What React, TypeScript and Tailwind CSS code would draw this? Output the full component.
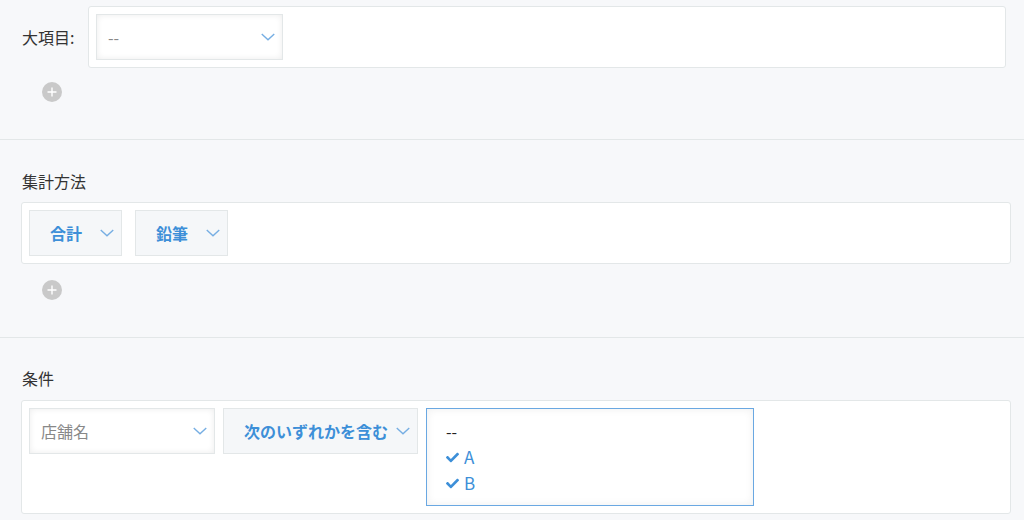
import { FaCheck } from "react-icons/fa";

const font = { fontFamily: '"Noto Sans CJK JP", "Noto Sans", sans-serif' };

function Chevron({ className = "" }: { className?: string }) {
  return (
    <svg viewBox="0 0 15 8" className={`w-[14px] h-[8px] shrink-0 ${className}`} fill="none">
      <path d="M0.8 0.8 L7.5 7 L14.2 0.8" stroke="#76aee3" strokeWidth="1.5" />
    </svg>
  );
}

function PlainSelect({ value, width }: { value: string; width: string }) {
  return (
    <div
      className={`${width} h-[46px] flex items-center justify-between pl-[11px] pr-[7px] bg-white border border-[#e3e7e8] shadow-[inset_0_0_6px_rgba(0,0,0,0.08)]`}
    >
      <span className="text-[16px] text-[#888]">{value}</span>
      <Chevron />
    </div>
  );
}

function BlueSelect({ value, width }: { value: string; width: string }) {
  return (
    <div
      className={`${width} h-[46px] flex items-center justify-between pl-[20px] pr-[7px] bg-[#f5f7f9] border border-[#e3e7e8]`}
    >
      <span className="text-[16px] font-bold text-[#3d8fd8]">{value}</span>
      <Chevron />
    </div>
  );
}

function AddButton() {
  return (
    <div className="ml-[21px] w-[20px] h-[20px] rounded-full bg-[#c9c9c9] flex items-center justify-center">
      <svg viewBox="0 0 10 10" className="w-[10px] h-[10px]">
        <path d="M5 0.5 V9.5 M0.5 5 H9.5" stroke="#fff" strokeWidth="1.4" />
      </svg>
    </div>
  );
}

export default function App() {
  return (
    <div className="w-[1024px] h-[520px] overflow-hidden bg-[#f7f8fa] text-[#333]" style={font}>
      {/* 大項目 */}
      <section className="pt-[6px] pl-[21px] pr-[18px] pb-[37px] border-b border-[#e3e7e8]">
        <div className="flex items-center">
          <div className="w-[67px] text-[16px] leading-[24px] pl-[1px]">大項目:</div>
          <div className="flex-1 bg-white border border-[#e3e7e8] rounded-[3px] p-[7px]">
            <PlainSelect value="--" width="w-[187px]" />
          </div>
        </div>
        <div className="mt-[14px]">
          <AddButton />
        </div>
      </section>

      {/* 集計方法 */}
      <section className="pt-[29px] pl-[21px] pr-[13px] pb-[37px] border-b border-[#e3e7e8]">
        <div className="text-[16px] leading-[24px] mb-[9px] pl-[1px]">集計方法</div>
        <div className="bg-white border border-[#e3e7e8] rounded-[3px] p-[7px] flex gap-[13px]">
          <BlueSelect value="合計" width="w-[93px]" />
          <BlueSelect value="鉛筆" width="w-[93px]" />
        </div>
        <div className="mt-[16px]">
          <AddButton />
        </div>
      </section>

      {/* 条件 */}
      <section className="pt-[28px] pl-[21px] pr-[13px]">
        <div className="text-[16px] leading-[24px] mb-[10px] pl-[1px]">条件</div>
        <div className="bg-white border border-[#e3e7e8] rounded-[3px] p-[7px] flex items-start gap-[8px]">
          <PlainSelect value="店舗名" width="w-[186px]" />
          <BlueSelect value="次のいずれかを含む" width="w-[195px]" />
          <div className="w-[328px] h-[98px] border border-[#6aa8e2] bg-white shadow-[inset_0_0_8px_rgba(0,0,0,0.07)] pt-[9px] pl-[19px]">
            <div className="text-[16px] leading-[26px] text-[#222]">--</div>
            <div className="flex items-center gap-[5px] text-[17px] leading-[26px] text-[#3d8fd8]">
              <FaCheck className="w-[13px] h-[13px]" />
              <span>A</span>
            </div>
            <div className="flex items-center gap-[5px] text-[17px] leading-[26px] text-[#3d8fd8]">
              <FaCheck className="w-[13px] h-[13px]" />
              <span>B</span>
            </div>
          </div>
        </div>
      </section>
    </div>
  );
}
